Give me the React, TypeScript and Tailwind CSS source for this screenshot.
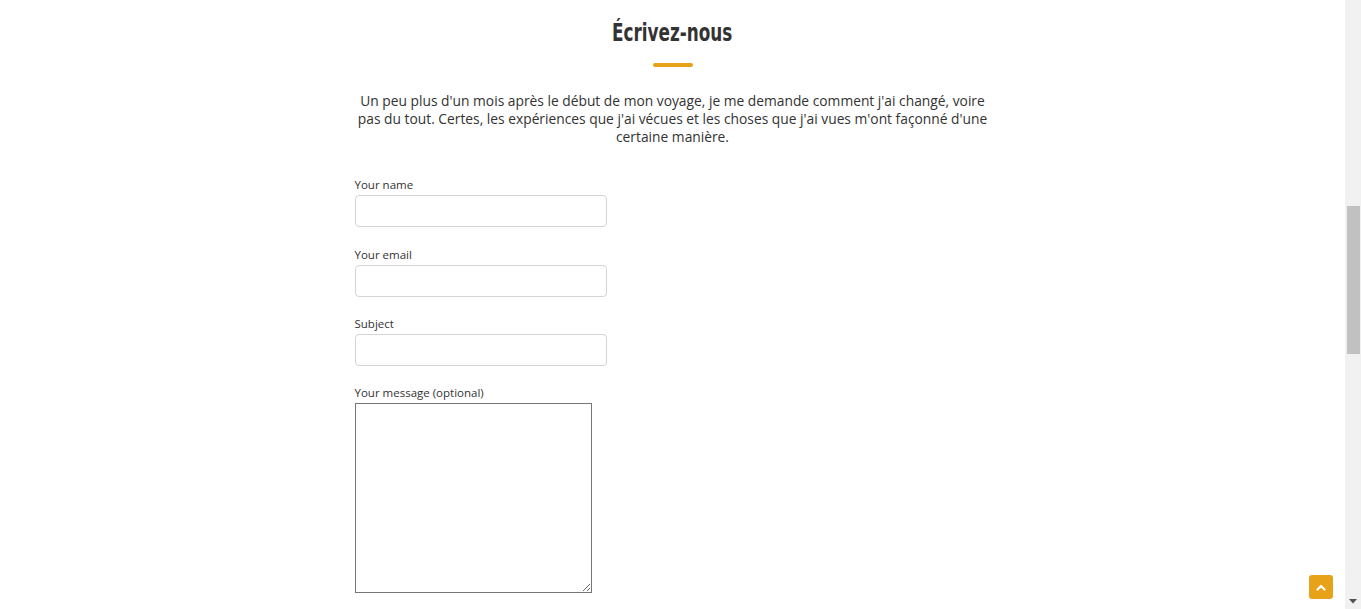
import React from "react";

export default function App() {
  const labelCls = "block text-[11.5px] leading-[16px] text-[#333333] [font-family:'Open_Sans','Liberation_Sans',sans-serif]";
  const inputCls = "mt-[2px] block w-[252px] h-[32px] rounded-[4px] border border-[#d4d4d4] bg-white outline-none";
  return (
    <div className="flex h-[609px] w-full overflow-hidden bg-white">
      <div className="relative flex-1">
        <div className="mx-auto flex w-[636px] flex-col items-center pt-[14px]">
          <h2 className="inline-block scale-x-[0.78] text-[24px] leading-[38px] font-bold text-[#333333] [font-family:'DejaVu_Sans_Condensed','DejaVu_Sans',sans-serif]">
            Écrivez-nous
          </h2>
          <div className="mt-[11px] h-[4px] w-[40px] rounded-full bg-[#e8a219]" />
          <p className="mt-[25px] text-center text-[13.8px] leading-[18px] text-[#333333] [font-family:'Open_Sans','Liberation_Sans',sans-serif]">
            Un peu plus d'un mois après le début de mon voyage, je me demande comment j'ai changé, voire
            <br />
            pas du tout. Certes, les expériences que j'ai vécues et les choses que j'ai vues m'ont façonné d'une
            <br />
            certaine manière.
          </p>
          <form className="mt-[31px] w-full">
            <div className="mb-[20px]">
              <label className={labelCls}>Your name</label>
              <input className={inputCls} type="text" />
            </div>
            <div className="mb-[19px]">
              <label className={labelCls}>Your email</label>
              <input className={inputCls} type="email" />
            </div>
            <div className="mb-[19px]">
              <label className={labelCls}>Subject</label>
              <input className={inputCls} type="text" />
            </div>
            <div>
              <label className={labelCls}>Your message (optional)</label>
              <textarea className="mt-[2px] block h-[190px] w-[237px] border border-[#767676] bg-white outline-none" />
            </div>
          </form>
        </div>
        <button className="absolute right-[12px] top-[575px] flex h-[24px] w-[24px] items-center justify-center rounded-[3px] bg-[#e8a219]">
          <svg width="10" height="7" viewBox="0 0 10 7">
            <path d="M1.5 5.5 L5 2 L8.5 5.5" stroke="white" strokeWidth="2.2" fill="none" strokeLinecap="round" strokeLinejoin="round" />
          </svg>
        </button>
      </div>
      <div className="flex w-[16px] flex-col bg-[#f1f1f1]">
        <div className="mx-auto mt-[206px] h-[148px] w-[13px] bg-[#c1c1c1]" />
        <div className="flex-1" />
        <div className="flex h-[16px] items-center justify-center">
          <svg width="8" height="5" viewBox="0 0 8 5">
            <path d="M0 0 L8 0 L4 4.5 Z" fill="#505050" />
          </svg>
        </div>
      </div>
    </div>
  );
}
